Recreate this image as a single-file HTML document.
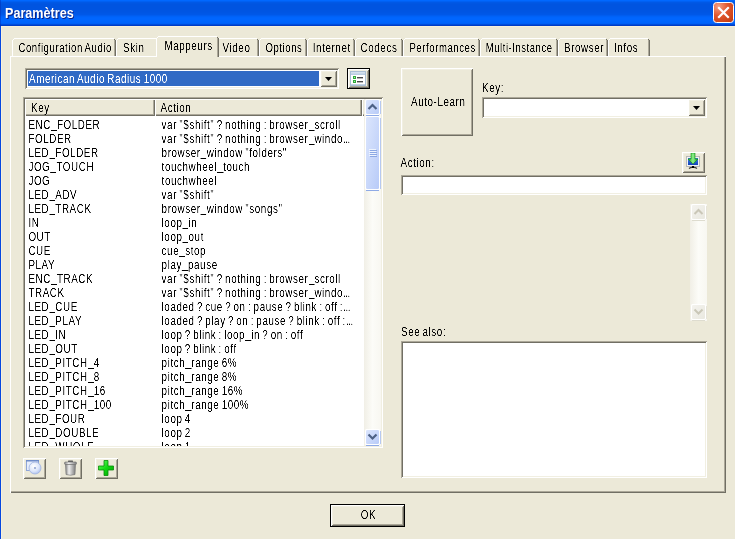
<!DOCTYPE html>
<html><head><meta charset="utf-8"><style>
*{box-sizing:border-box;margin:0;padding:0}
html,body{width:735px;height:539px;overflow:hidden;background:#ECE9D8}
body{position:relative;font-family:"Liberation Sans",sans-serif;font-size:12px;color:#000}
.a{position:absolute}
.t{position:absolute;white-space:pre;line-height:14px;transform:scaleX(0.82);transform-origin:0 0;letter-spacing:0.7px;word-spacing:-1.2px;filter:url(#crisp)}
.raised{background:#ECE9D8;box-shadow:inset 1px 1px #FFFFFF,inset -1px -1px #716F64,inset 2px 2px #F1EFE2,inset -2px -2px #ACA899}
.sunken{background:#fff;box-shadow:inset 1px 1px #ACA899,inset -1px -1px #FFFFFF,inset 2px 2px #716F64,inset -2px -2px #F1EFE2}
.defbtn{background:#ECE9D8;border:1px solid #000;box-shadow:inset 1px 1px #FFFFFF,inset -1px -1px #716F64,inset 2px 2px #F1EFE2,inset -2px -2px #ACA899}
.tab{position:absolute;top:38px;height:18px;border-left:1px solid #FFFFFF;border-top:1px solid #FFFFFF;box-shadow:inset -1px 0 #ACA899}
.tab:after{content:"";position:absolute;right:-1px;top:1px;bottom:0;width:1px;background:#716F64}
.hdr{position:absolute;top:99px;height:17px;background:#ECE9D8;box-shadow:inset 1px 1px #FFFFFF,inset -1px -1px #716F64,inset -2px -2px #ACA899}
.row{position:absolute;left:0;height:14px;width:339px;white-space:pre;line-height:14px}
.k,.v{position:absolute;top:0;transform:scaleX(0.82);transform-origin:0 0;letter-spacing:0.7px;word-spacing:-1.2px;filter:url(#crisp)}
.u{color:transparent;-webkit-text-stroke-width:0;background:linear-gradient(#000,#000) 0 12px/100% 1px no-repeat}
.k{left:4px;text-indent:-0.75px}.v{left:137px;text-indent:-0.5px}
</style></head><body>
<svg width="0" height="0" style="position:absolute"><filter id="crisp"><feComponentTransfer><feFuncA type="linear" slope="2" intercept="-0.5"/></feComponentTransfer></filter></svg>
<div class="a" style="left:0px;top:0px;width:735px;height:26px;background:linear-gradient(#0068FF 0px 1px,#0060F2 1px 2px,#0058E6 2px 3px,#0056E2 3px 4px,#0054E0 4px 5px,#0054E0 5px 6px,#0054E0 6px 7px,#0054E0 7px 8px,#0054E0 8px 9px,#0054E1 9px 10px,#0055E2 10px 11px,#0055E3 11px 12px,#0056E4 12px 13px,#0057E6 13px 14px,#0058E8 14px 15px,#005DF0 15px 16px,#0062F8 16px 17px,#0065FD 17px 18px,#0066FF 18px 19px,#0066FF 19px 20px,#0066FF 20px 21px,#0065FD 21px 22px,#0064FC 22px 23px,#0060F6 23px 24px,#004DDB 24px 25px,#003CC6 25px 26px);"></div>
<div class="a" style="left:5px;top:5px;font-weight:bold;font-size:14px;color:#fff;text-shadow:1px 1px #0A1E80;line-height:17px;white-space:pre;transform:scaleX(.9);transform-origin:0 0">Paramètres</div>
<svg class="a" style="left:713px;top:2px" width="21" height="21" viewBox="0 0 21 21">
<defs><radialGradient id="cg" cx="0.25" cy="0.2" r="1"><stop offset="0" stop-color="#F4A086"/><stop offset="0.45" stop-color="#E2582E"/><stop offset="1" stop-color="#C23A10"/></radialGradient></defs>
<rect x="0.5" y="0.5" width="20" height="20" rx="3" fill="url(#cg)" stroke="#fff" stroke-width="1"/>
<path d="M6 6L15 15M15 6L6 15" stroke="#fff" stroke-width="2.2" stroke-linecap="square"/>
</svg>
<div class="a" style="left:0px;top:26px;width:1px;height:513px;background:#0648E0;"></div>
<div class="a" style="left:1px;top:26px;width:1px;height:513px;background:#F8F1DA;"></div>
<div class="a" style="left:1px;top:26px;width:734px;height:1px;background:#F8F1DA;"></div>
<div class="a" style="left:0px;top:0px;width:1px;height:26px;background:rgba(0,30,160,0.35);"></div>
<div class="a" style="left:12px;top:40px;width:1px;height:16px;background:#FFFFFF;"></div><div class="a" style="left:13px;top:39px;width:1px;height:1px;background:#FFFFFF;"></div><div class="a" style="left:14px;top:38px;width:100px;height:1px;background:#FFFFFF;"></div><div class="a" style="left:114px;top:39px;width:1px;height:1px;background:#716F64;"></div><div class="a" style="left:114px;top:40px;width:1px;height:16px;background:#ACA899;"></div><div class="a" style="left:115px;top:40px;width:1px;height:16px;background:#716F64;"></div>
<div class="t" style="left:19px;top:41px;text-indent:-0.75px;transform:scaleX(.80)">Configuration Audio</div>
<div class="a" style="left:116px;top:40px;width:1px;height:16px;background:#FFFFFF;"></div><div class="a" style="left:117px;top:39px;width:1px;height:1px;background:#FFFFFF;"></div><div class="a" style="left:118px;top:38px;width:39px;height:1px;background:#FFFFFF;"></div><div class="a" style="left:157px;top:39px;width:1px;height:1px;background:#716F64;"></div><div class="a" style="left:157px;top:40px;width:1px;height:16px;background:#ACA899;"></div><div class="a" style="left:158px;top:40px;width:1px;height:16px;background:#716F64;"></div>
<div class="t" style="left:123px;top:41px;text-indent:0px;">Skin</div>
<div class="a" style="left:217px;top:40px;width:1px;height:16px;background:#FFFFFF;"></div><div class="a" style="left:218px;top:39px;width:1px;height:1px;background:#FFFFFF;"></div><div class="a" style="left:219px;top:38px;width:38px;height:1px;background:#FFFFFF;"></div><div class="a" style="left:257px;top:39px;width:1px;height:1px;background:#716F64;"></div><div class="a" style="left:257px;top:40px;width:1px;height:16px;background:#ACA899;"></div><div class="a" style="left:258px;top:40px;width:1px;height:16px;background:#716F64;"></div>
<div class="t" style="left:223px;top:41px;text-indent:-0.5px;">Video</div>
<div class="a" style="left:259px;top:40px;width:1px;height:16px;background:#FFFFFF;"></div><div class="a" style="left:260px;top:39px;width:1px;height:1px;background:#FFFFFF;"></div><div class="a" style="left:261px;top:38px;width:44px;height:1px;background:#FFFFFF;"></div><div class="a" style="left:305px;top:39px;width:1px;height:1px;background:#716F64;"></div><div class="a" style="left:305px;top:40px;width:1px;height:16px;background:#ACA899;"></div><div class="a" style="left:306px;top:40px;width:1px;height:16px;background:#716F64;"></div>
<div class="t" style="left:266px;top:41px;text-indent:-0.75px;transform:scaleX(.80)">Options</div>
<div class="a" style="left:307px;top:40px;width:1px;height:16px;background:#FFFFFF;"></div><div class="a" style="left:308px;top:39px;width:1px;height:1px;background:#FFFFFF;"></div><div class="a" style="left:309px;top:38px;width:44px;height:1px;background:#FFFFFF;"></div><div class="a" style="left:353px;top:39px;width:1px;height:1px;background:#716F64;"></div><div class="a" style="left:353px;top:40px;width:1px;height:16px;background:#ACA899;"></div><div class="a" style="left:354px;top:40px;width:1px;height:16px;background:#716F64;"></div>
<div class="t" style="left:313px;top:41px;text-indent:-0.25px;">Internet</div>
<div class="a" style="left:355px;top:40px;width:1px;height:16px;background:#FFFFFF;"></div><div class="a" style="left:356px;top:39px;width:1px;height:1px;background:#FFFFFF;"></div><div class="a" style="left:357px;top:38px;width:44px;height:1px;background:#FFFFFF;"></div><div class="a" style="left:401px;top:39px;width:1px;height:1px;background:#716F64;"></div><div class="a" style="left:401px;top:40px;width:1px;height:16px;background:#ACA899;"></div><div class="a" style="left:402px;top:40px;width:1px;height:16px;background:#716F64;"></div>
<div class="t" style="left:361px;top:41px;text-indent:-0.5px;">Codecs</div>
<div class="a" style="left:403px;top:40px;width:1px;height:16px;background:#FFFFFF;"></div><div class="a" style="left:404px;top:39px;width:1px;height:1px;background:#FFFFFF;"></div><div class="a" style="left:405px;top:38px;width:73px;height:1px;background:#FFFFFF;"></div><div class="a" style="left:478px;top:39px;width:1px;height:1px;background:#716F64;"></div><div class="a" style="left:478px;top:40px;width:1px;height:16px;background:#ACA899;"></div><div class="a" style="left:479px;top:40px;width:1px;height:16px;background:#716F64;"></div>
<div class="t" style="left:410px;top:41px;text-indent:-0.75px;transform:scaleX(.80)">Performances</div>
<div class="a" style="left:480px;top:40px;width:1px;height:16px;background:#FFFFFF;"></div><div class="a" style="left:481px;top:39px;width:1px;height:1px;background:#FFFFFF;"></div><div class="a" style="left:482px;top:38px;width:74px;height:1px;background:#FFFFFF;"></div><div class="a" style="left:556px;top:39px;width:1px;height:1px;background:#716F64;"></div><div class="a" style="left:556px;top:40px;width:1px;height:16px;background:#ACA899;"></div><div class="a" style="left:557px;top:40px;width:1px;height:16px;background:#716F64;"></div>
<div class="t" style="left:486px;top:41px;text-indent:-0.25px;transform:scaleX(.79)">Multi-Instance</div>
<div class="a" style="left:558px;top:40px;width:1px;height:16px;background:#FFFFFF;"></div><div class="a" style="left:559px;top:39px;width:1px;height:1px;background:#FFFFFF;"></div><div class="a" style="left:560px;top:38px;width:46px;height:1px;background:#FFFFFF;"></div><div class="a" style="left:606px;top:39px;width:1px;height:1px;background:#716F64;"></div><div class="a" style="left:606px;top:40px;width:1px;height:16px;background:#ACA899;"></div><div class="a" style="left:607px;top:40px;width:1px;height:16px;background:#716F64;"></div>
<div class="t" style="left:564px;top:41px;text-indent:0px;">Browser</div>
<div class="a" style="left:608px;top:40px;width:1px;height:16px;background:#FFFFFF;"></div><div class="a" style="left:609px;top:39px;width:1px;height:1px;background:#FFFFFF;"></div><div class="a" style="left:610px;top:38px;width:38px;height:1px;background:#FFFFFF;"></div><div class="a" style="left:648px;top:39px;width:1px;height:1px;background:#716F64;"></div><div class="a" style="left:648px;top:40px;width:1px;height:16px;background:#ACA899;"></div><div class="a" style="left:649px;top:40px;width:1px;height:16px;background:#716F64;"></div>
<div class="t" style="left:614px;top:41px;text-indent:0px;">Infos</div>
<div class="a" style="left:10px;top:56px;width:716px;height:437px;background:#ECE9D8;border-left:1px solid #fff;border-top:1px solid #fff;box-shadow:inset -1px -1px #716F64,inset -2px -2px #ACA899"></div>
<div class="a" style="left:157px;top:37px;width:61px;height:20px;background:#ECE9D8;"></div>
<div class="a" style="left:158px;top:36px;width:59px;height:1px;background:#ECE9D8;"></div>
<div class="a" style="left:156px;top:38px;width:1px;height:19px;background:#FFFFFF;"></div><div class="a" style="left:157px;top:37px;width:1px;height:1px;background:#FFFFFF;"></div><div class="a" style="left:158px;top:36px;width:59px;height:1px;background:#FFFFFF;"></div><div class="a" style="left:217px;top:37px;width:1px;height:1px;background:#716F64;"></div><div class="a" style="left:217px;top:38px;width:1px;height:19px;background:#ACA899;"></div><div class="a" style="left:218px;top:38px;width:1px;height:19px;background:#716F64;"></div>
<div class="t" style="left:165px;top:39px;text-indent:-0.75px;">Mappeurs</div>
<div class="a sunken" style="left:25px;top:68px;width:314px;height:21px;background:#fff"></div>
<div class="a" style="left:28px;top:71px;width:291px;height:15px;background:#316AC5;"></div>
<div class="t" style="left:29px;top:72px;text-indent:0px;color:#fff">American Audio Radius 1000</div>
<div class="a raised" style="left:320px;top:70px;width:17px;height:17px"></div>
<svg class="a" style="left:325px;top:77px" width="7" height="4"><path d="M0 0H7L3.5 4Z" fill="#000"/></svg>
<div class="a defbtn" style="left:347px;top:68px;width:23px;height:21px"></div>
<svg class="a" style="left:350px;top:71px" width="16" height="15" viewBox="0 0 16 15">
<defs><linearGradient id="lt" x1="0" y1="0" x2="0" y2="1"><stop offset="0" stop-color="#D9E5F1"/><stop offset="1" stop-color="#B5C9DE"/></linearGradient></defs>
<rect x="0.5" y="0.5" width="15" height="14" fill="#fff" stroke="#A9BED4"/>
<rect x="1" y="1" width="14" height="3" fill="url(#lt)"/>
<rect x="1" y="13" width="14" height="1" fill="#C4D3E3"/>
<rect x="3" y="5" width="3" height="3" fill="#2EA83A"/><rect x="4" y="6" width="1" height="1" fill="#A8F0A8"/>
<rect x="3" y="9" width="3" height="3" fill="#2EA83A"/><rect x="4" y="10" width="1" height="1" fill="#A8F0A8"/>
<rect x="7" y="6" width="6" height="1.4" fill="#4A4A4A"/>
<rect x="7" y="10" width="6" height="1.4" fill="#4A4A4A"/>
</svg>
<div class="a sunken" style="left:23px;top:97px;width:360px;height:351px;background:#fff"></div>
<div class="hdr" style="left:25px;width:130px"></div>
<div class="t" style="left:31px;top:101px;text-indent:0px;">Key</div>
<div class="hdr" style="left:155px;width:207px"></div>
<div class="t" style="left:161px;top:101px;text-indent:-0.5px;">Action</div>
<div class="hdr" style="left:362px;width:6px"></div>
<div class="a" style="left:25px;top:116px;width:339px;height:330px;overflow:hidden">
<div class="row" style="top:2px"><span class="k">ENC<span class="u">_</span>FOLDER</span><span class="v">var &quot;$shift&quot; ? nothing : browser<span class="u">_</span>scroll</span></div>
<div class="row" style="top:16px"><span class="k">FOLDER</span><span class="v">var &quot;$shift&quot; ? nothing : browser<span class="u">_</span>windo<span style="letter-spacing:-0.6px">...</span></span></div>
<div class="row" style="top:30px"><span class="k">LED<span class="u">_</span>FOLDER</span><span class="v">browser<span class="u">_</span>window &quot;folders&quot;</span></div>
<div class="row" style="top:44px"><span class="k">JOG<span class="u">_</span>TOUCH</span><span class="v">touchwheel<span class="u">_</span>touch</span></div>
<div class="row" style="top:58px"><span class="k">JOG</span><span class="v">touchwheel</span></div>
<div class="row" style="top:72px"><span class="k">LED<span class="u">_</span>ADV</span><span class="v">var &quot;$shift&quot;</span></div>
<div class="row" style="top:86px"><span class="k">LED<span class="u">_</span>TRACK</span><span class="v">browser<span class="u">_</span>window &quot;songs&quot;</span></div>
<div class="row" style="top:100px"><span class="k">IN</span><span class="v">loop<span class="u">_</span>in</span></div>
<div class="row" style="top:114px"><span class="k">OUT</span><span class="v">loop<span class="u">_</span>out</span></div>
<div class="row" style="top:128px"><span class="k">CUE</span><span class="v">cue<span class="u">_</span>stop</span></div>
<div class="row" style="top:142px"><span class="k">PLAY</span><span class="v">play<span class="u">_</span>pause</span></div>
<div class="row" style="top:156px"><span class="k">ENC<span class="u">_</span>TRACK</span><span class="v">var &quot;$shift&quot; ? nothing : browser<span class="u">_</span>scroll</span></div>
<div class="row" style="top:170px"><span class="k">TRACK</span><span class="v">var &quot;$shift&quot; ? nothing : browser<span class="u">_</span>windo<span style="letter-spacing:-0.6px">...</span></span></div>
<div class="row" style="top:184px"><span class="k">LED<span class="u">_</span>CUE</span><span class="v">loaded ? cue ? on : pause ? blink : off :<span style="letter-spacing:-0.6px">...</span></span></div>
<div class="row" style="top:198px"><span class="k">LED<span class="u">_</span>PLAY</span><span class="v">loaded ? play ? on : pause ? blink : off :<span style="letter-spacing:-0.6px">...</span></span></div>
<div class="row" style="top:212px"><span class="k">LED<span class="u">_</span>IN</span><span class="v">loop ? blink : loop<span class="u">_</span>in ? on : off</span></div>
<div class="row" style="top:226px"><span class="k">LED<span class="u">_</span>OUT</span><span class="v">loop ? blink : off</span></div>
<div class="row" style="top:240px"><span class="k">LED<span class="u">_</span>PITCH<span class="u">_</span>4</span><span class="v">pitch<span class="u">_</span>range 6%</span></div>
<div class="row" style="top:254px"><span class="k">LED<span class="u">_</span>PITCH<span class="u">_</span>8</span><span class="v">pitch<span class="u">_</span>range 8%</span></div>
<div class="row" style="top:268px"><span class="k">LED<span class="u">_</span>PITCH<span class="u">_</span>16</span><span class="v">pitch<span class="u">_</span>range 16%</span></div>
<div class="row" style="top:282px"><span class="k">LED<span class="u">_</span>PITCH<span class="u">_</span>100</span><span class="v">pitch<span class="u">_</span>range 100%</span></div>
<div class="row" style="top:296px"><span class="k">LED<span class="u">_</span>FOUR</span><span class="v">loop 4</span></div>
<div class="row" style="top:310px"><span class="k">LED<span class="u">_</span>DOUBLE</span><span class="v">loop 2</span></div>
<div class="row" style="top:324px"><span class="k">LED<span class="u">_</span>WHOLE</span><span class="v">loop 1</span></div>
</div>
<svg class="a" style="left:364px;top:99px" width="17" height="347" viewBox="0 0 17 347"><defs><linearGradient id="tr364" x1="0" x2="1"><stop offset="0" stop-color="#F1EFE6"/><stop offset="0.5" stop-color="#FCFCF8"/><stop offset="1" stop-color="#F8F7F1"/></linearGradient><linearGradient id="bf364" x1="0" y1="0" x2="1" y2="1"><stop offset="0" stop-color="#DCE6FD"/><stop offset="1" stop-color="#B8CBF8"/></linearGradient></defs><rect x="0" y="0" width="17" height="347" fill="url(#tr364)"/><rect x="2" y="16" width="13" height="1" fill="#8FAAE6"/><rect x="16" y="2" width="1" height="13" fill="#B6C8F0"/><rect x="15" y="15" width="1" height="1" fill="#B6C8F0"/><rect x="1" y="0" width="15" height="16" rx="1.5" fill="#fff"/><rect x="2" y="1" width="13" height="14" rx="1.2" fill="url(#bf364)"/><path d="M4.5 10L8.5 6L12.5 10" fill="none" stroke="#4D6185" stroke-width="2.2"/><rect x="2" y="346" width="13" height="1" fill="#8FAAE6"/><rect x="16" y="332" width="1" height="13" fill="#B6C8F0"/><rect x="15" y="345" width="1" height="1" fill="#B6C8F0"/><rect x="1" y="330" width="15" height="16" rx="1.5" fill="#fff"/><rect x="2" y="331" width="13" height="14" rx="1.2" fill="url(#bf364)"/><path d="M4.5 335.5L8.5 339.5L12.5 335.5" fill="none" stroke="#4D6185" stroke-width="2.2"/><rect x="2" y="91" width="13" height="1" fill="#8FAAE6"/><rect x="16" y="19" width="1" height="71" fill="#B6C8F0"/><rect x="1" y="17" width="15" height="74" rx="1.5" fill="#fff"/><rect x="2" y="18" width="13" height="72" rx="1.2" fill="url(#bf364)"/><rect x="5" y="50" width="7" height="1" fill="#EEF4FE"/><rect x="6" y="51" width="7" height="1" fill="#8CA8E4"/><rect x="5" y="52" width="7" height="1" fill="#EEF4FE"/><rect x="6" y="53" width="7" height="1" fill="#8CA8E4"/><rect x="5" y="54" width="7" height="1" fill="#EEF4FE"/><rect x="6" y="55" width="7" height="1" fill="#8CA8E4"/><rect x="5" y="56" width="7" height="1" fill="#EEF4FE"/><rect x="6" y="57" width="7" height="1" fill="#8CA8E4"/></svg>
<div class="a raised" style="left:401px;top:68px;width:72px;height:68px"></div>
<div class="t" style="left:411px;top:95px;text-indent:0px;">Auto-Learn</div>
<div class="t" style="left:482px;top:81px;text-indent:0px;">Key:</div>
<div class="a sunken" style="left:482px;top:97px;width:225px;height:21px;background:#fff"></div>
<div class="a raised" style="left:688px;top:99px;width:17px;height:17px"></div>
<svg class="a" style="left:693px;top:106px" width="7" height="4"><path d="M0 0H7L3.5 4Z" fill="#000"/></svg>
<div class="t" style="left:401px;top:156px;text-indent:-0.5px;">Action:</div>
<div class="a raised" style="left:682px;top:152px;width:23px;height:21px"></div>
<svg class="a" style="left:685px;top:153px" width="17" height="17" viewBox="0 0 17 17">
<defs><linearGradient id="scr" x1="0" y1="0" x2="0" y2="1"><stop offset="0" stop-color="#3A7BE8"/><stop offset="1" stop-color="#1444B8"/></linearGradient>
<linearGradient id="arw" x1="0" x2="1"><stop offset="0" stop-color="#1FA81F"/><stop offset="0.5" stop-color="#8CF08C"/><stop offset="1" stop-color="#18A018"/></linearGradient></defs>
<rect x="1.5" y="3.5" width="13" height="10" fill="#F4F4F4" stroke="#B8B8B8"/>
<rect x="3" y="5" width="10" height="7" fill="url(#scr)"/>
<path d="M4 15.5Q6 14 8 14.5Q10 14 12 15.5" fill="none" stroke="#3A3A3A" stroke-width="1.2"/>
<rect x="7" y="13" width="2" height="2" fill="#000"/>
<path d="M6 0H10V6H13L8 11L3 6H6Z" fill="url(#arw)" stroke="#139013" stroke-width="0.6"/>
</svg>
<div class="a sunken" style="left:401px;top:175px;width:306px;height:20px;background:#fff"></div>
<svg class="a" style="left:690px;top:204px" width="17" height="117" viewBox="0 0 17 117"><defs><linearGradient id="tr690" x1="0" x2="1"><stop offset="0" stop-color="#F1EFE6"/><stop offset="0.5" stop-color="#FCFCF8"/><stop offset="1" stop-color="#F8F7F1"/></linearGradient><linearGradient id="bf690" x1="0" y1="0" x2="1" y2="1"><stop offset="0" stop-color="#F4F3EE"/><stop offset="1" stop-color="#E9E8E0"/></linearGradient></defs><rect x="0" y="0" width="17" height="117" fill="url(#tr690)"/><rect x="2" y="16" width="13" height="1" fill="#DEDCCF"/><rect x="16" y="2" width="1" height="13" fill="#E6E4D8"/><rect x="15" y="15" width="1" height="1" fill="#E6E4D8"/><rect x="1" y="0" width="15" height="16" rx="1.5" fill="#fff"/><rect x="2" y="1" width="13" height="14" rx="1.2" fill="url(#bf690)"/><path d="M4.5 10L8.5 6L12.5 10" fill="none" stroke="#CAC7B8" stroke-width="2"/><rect x="2" y="116" width="13" height="1" fill="#DEDCCF"/><rect x="16" y="102" width="1" height="13" fill="#E6E4D8"/><rect x="15" y="115" width="1" height="1" fill="#E6E4D8"/><rect x="1" y="100" width="15" height="16" rx="1.5" fill="#fff"/><rect x="2" y="101" width="13" height="14" rx="1.2" fill="url(#bf690)"/><path d="M4.5 105.5L8.5 109.5L12.5 105.5" fill="none" stroke="#CAC7B8" stroke-width="2"/></svg>
<div class="t" style="left:401px;top:325px;text-indent:0px;">See also:</div>
<div class="a sunken" style="left:401px;top:341px;width:306px;height:137px;background:#fff"></div>
<div class="a raised" style="left:23px;top:458px;width:23px;height:21px"></div>
<svg class="a" style="left:25px;top:459px" width="18" height="17" viewBox="0 0 18 17">
<defs><radialGradient id="cd" cx="0.4" cy="0.35" r="0.7"><stop offset="0" stop-color="#FFFFFF"/><stop offset="0.6" stop-color="#DDE6FA"/><stop offset="1" stop-color="#A9BEEE"/></radialGradient></defs>
<rect x="1.5" y="1.5" width="12" height="10" fill="#E6EDFC" stroke="#8FA6D8"/>
<rect x="1" y="1" width="13" height="1.5" fill="#6F8CC8"/>
<circle cx="10" cy="9" r="6" fill="url(#cd)" stroke="#9FB2E0" stroke-width="0.8"/>
<circle cx="10" cy="9" r="0.9" fill="#7F95C8"/>
</svg>
<div class="a raised" style="left:59px;top:458px;width:23px;height:21px"></div>
<svg class="a" style="left:62px;top:459px" width="17" height="18" viewBox="0 0 17 18">
<defs><linearGradient id="tb" x1="0" x2="1"><stop offset="0" stop-color="#808080"/><stop offset="0.35" stop-color="#F0F0F0"/><stop offset="1" stop-color="#7A7A7A"/></linearGradient></defs>
<rect x="6" y="1.5" width="5" height="1.5" rx="0.5" fill="#606060"/>
<rect x="2.5" y="3" width="12" height="2.5" rx="1" fill="url(#tb)" stroke="#6A6A6A" stroke-width="0.6"/>
<path d="M3.5 5.5H13.5L13 15.5Q8.5 17 4 15.5Z" fill="url(#tb)" stroke="#707070" stroke-width="0.6"/>
</svg>
<div class="a raised" style="left:95px;top:458px;width:23px;height:21px"></div>
<svg class="a" style="left:97px;top:459px" width="18" height="18" viewBox="0 0 18 18">
<defs><linearGradient id="pg" x1="0" y1="0" x2="1" y2="1"><stop offset="0" stop-color="#6CFF6C"/><stop offset="0.5" stop-color="#12D812"/><stop offset="1" stop-color="#00A000"/></linearGradient></defs>
<path d="M7 1.5H11V7H16.5V11H11V16.5H7V11H1.5V7H7Z" fill="url(#pg)" stroke="#0A8A0A" stroke-width="0.8"/>
</svg>
<div class="a defbtn" style="left:330px;top:504px;width:75px;height:23px"></div>
<div class="t" style="left:361px;top:508px;text-indent:-0.25px;">OK</div>
</body></html>
